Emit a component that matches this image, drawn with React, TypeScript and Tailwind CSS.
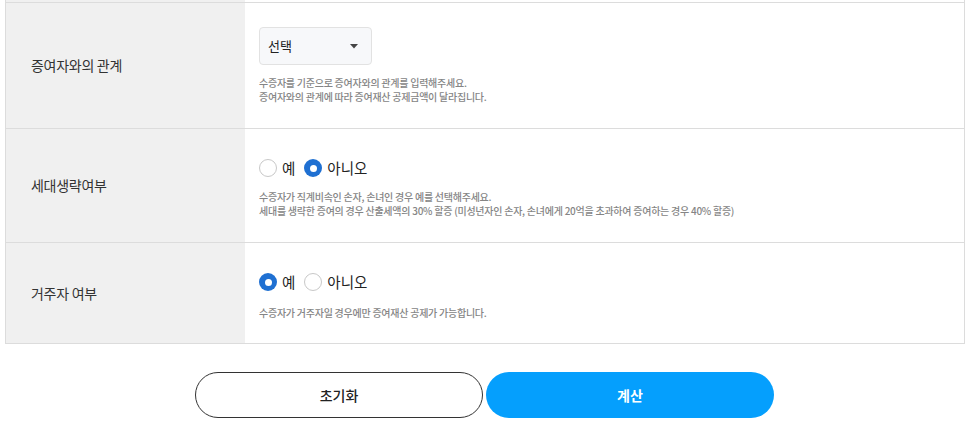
import React, { useState } from "react";

const FONT = { fontFamily: '"Noto Sans CJK KR", "Noto Sans", sans-serif' };

function Radio({ checked, label, onClick }: { checked: boolean; label: string; onClick: () => void }) {
  return (
    <button type="button" onClick={onClick} className="flex items-center gap-[5px] h-[30px]">
      {checked ? (
        <span className="w-[18px] h-[18px] rounded-full bg-[#1f70d2] flex items-center justify-center">
          <span className="w-[7px] h-[7px] rounded-full bg-white" />
        </span>
      ) : (
        <span className="w-[18px] h-[18px] rounded-full border border-[#c8c8c8] bg-white" />
      )}
      <span className="text-[14.5px] text-[#222] leading-none">{label}</span>
    </button>
  );
}

function Help({ lines }: { lines: string[] }) {
  return (
    <div className="text-[10px] leading-[14px] text-[#858585] font-medium tracking-[-0.025em]">
      {lines.map((l) => (
        <div key={l}>{l}</div>
      ))}
    </div>
  );
}

function Row({ label, children, last }: { label: string; children: React.ReactNode; last?: boolean }) {
  return (
    <div className="grid grid-cols-[239px_1fr] border-b border-[#dcdcdc]">
      <div className="bg-[#f0f0f0] flex items-center pl-[25px] text-[14px] text-[#333] tracking-[-0.02em]">
        {label}
      </div>
      <div className={last ? "pl-[14px] pt-[24px] pb-[23px]" : "pl-[14px] pt-[24px] pb-[24px]"}>{children}</div>
    </div>
  );
}

export default function App() {
  const [skip, setSkip] = useState(false);
  const [resident, setResident] = useState(true);

  return (
    <div style={FONT} className="w-[965px] h-[431px] bg-white overflow-hidden">
      <div className="mx-[5px] w-[960px] border-x border-[#dcdcdc]">
        <div className="grid grid-cols-[239px_1fr] h-[3px] border-b border-[#dcdcdc]">
          <div className="bg-[#f0f0f0]" />
          <div />
        </div>

        <Row label="증여자와의 관계">
          <div className="w-[113px] h-[38px] rounded-[4px] border border-[#e2e2e2] bg-[#f7f8fa] flex items-center justify-between pl-[8px] pr-[13px]">
            <span className="text-[13px] text-[#222]">선택</span>
            <svg width="8" height="5" viewBox="0 0 8 5">
              <path d="M0 0 H8 L4 4.5 Z" fill="#444" />
            </svg>
          </div>
          <div className="mt-[11px]">
            <Help
              lines={[
                "수증자를 기준으로 증여자와의 관계를 입력해주세요.",
                "증여자와의 관계에 따라 증여재산 공제금액이 달라집니다.",
              ]}
            />
          </div>
        </Row>

        <Row label="세대생략여부">
          <div className="flex items-center gap-[9px]">
            <Radio checked={skip} label="예" onClick={() => setSkip(true)} />
            <Radio checked={!skip} label="아니오" onClick={() => setSkip(false)} />
          </div>
          <div className="mt-[7px]">
            <Help
              lines={[
                "수증자가 직계비속인 손자, 손녀인 경우 예를 선택해주세요.",
                "세대를 생략한 증여의 경우 산출세액의 30% 할증 (미성년자인 손자, 손녀에게 20억을 초과하여 증여하는 경우 40% 할증)",
              ]}
            />
          </div>
        </Row>

        <Row label="거주자 여부" last>
          <div className="flex items-center gap-[9px]">
            <Radio checked={resident} label="예" onClick={() => setResident(true)} />
            <Radio checked={!resident} label="아니오" onClick={() => setResident(false)} />
          </div>
          <div className="mt-[9px]">
            <Help lines={["수증자가 거주자일 경우에만 증여재산 공제가 가능합니다."]} />
          </div>
        </Row>
      </div>

      <div className="flex justify-center gap-[3px] mt-[28px] pl-[4px]">
        <button
          type="button"
          className="w-[288px] h-[46px] rounded-full border border-[#333] bg-white text-[14px] font-medium text-[#222]"
        >
          초기화
        </button>
        <button
          type="button"
          className="w-[288px] h-[46px] rounded-full bg-[#059ffd] text-[14px] font-bold text-white"
        >
          계산
        </button>
      </div>
    </div>
  );
}
